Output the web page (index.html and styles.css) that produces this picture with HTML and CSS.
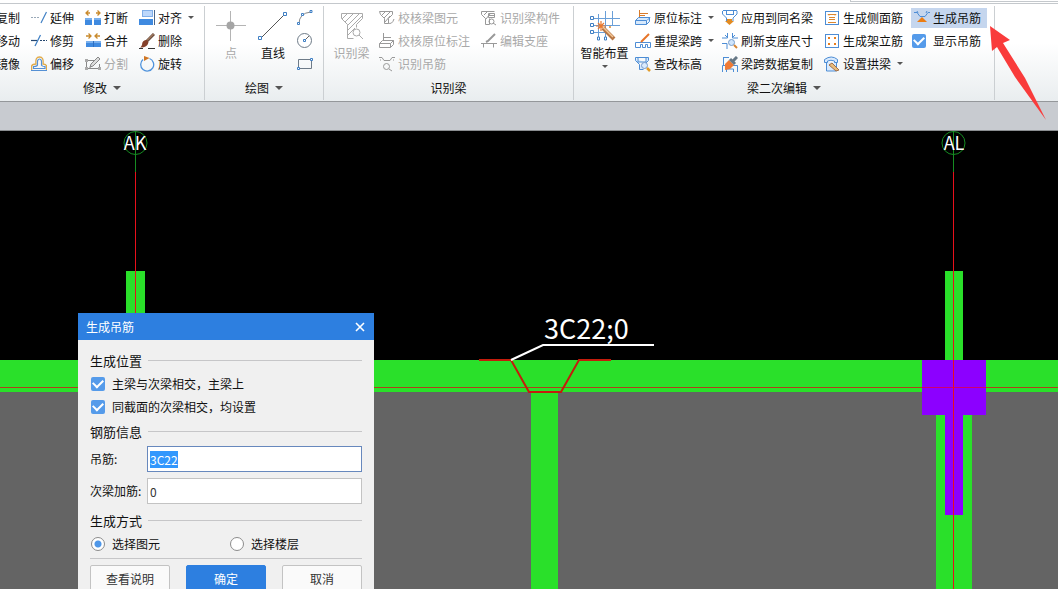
FILE: index.html
```html
<!DOCTYPE html>
<html lang="zh-CN">
<head>
<meta charset="utf-8">
<title>梁二次编辑</title>
<link rel="stylesheet" href="styles.css">
</head>
<body>
<div class="app">
  <div class="tab-strip"><div class="tab-edge"></div></div>
  <header class="ribbon">
    <section class="group group-modify">
      <div class="tools cols-modify">
        <button class="tool tool-cut">复制</button>
        <button class="tool"><svg class="icon" viewBox="0 0 16 16"><path d="M0 7.500H9" stroke="#9aa9b8" stroke-dasharray="2 1"/><path d="M10 13L15.500 2" stroke="#3f7fc4" stroke-width="1.200"/></svg>延伸</button>
        <button class="tool"><svg class="icon" viewBox="0 0 16 16"><path d="M0 8h7v7H0zM9 8h7v7H9z" fill="#3f8ae0"/><path d="M0 8h7v2H0zM9 8h7v2H9z" fill="#79b0ee"/><path d="M3.500 0.500L1 3l2.500 2.500M1 3h4M12.500 0.500L15 3l-2.500 2.500M15 3h-4" stroke="#c98a2c" stroke-width="1.300" fill="none"/></svg>打断</button>
        <button class="tool"><svg class="icon" viewBox="0 0 16 16"><rect x="3.500" y="0.500" width="10" height="6" fill="#bcd7fb" stroke="#80aee8"/><path d="M0 9h14v6H0z" fill="#3f8ae0"/><path d="M15.500 0v15" stroke="#4a6587"/></svg>对齐<i class="caret"></i></button>
        <button class="tool tool-cut">移动</button>
        <button class="tool"><svg class="icon" viewBox="0 0 16 16"><path d="M0 7.500H6" stroke="#24466f" stroke-width="1.200"/><path d="M4 13L9.500 2" stroke="#3f7fc4" stroke-width="1.200"/><path d="M9 7.500h7" stroke="#24466f" stroke-dasharray="2 1"/></svg>修剪</button>
        <button class="tool"><svg class="icon" viewBox="0 0 16 16"><path d="M1 8h15v6H1z" fill="#3f8ae0"/><path d="M1 8h15v2H1z" fill="#79b0ee"/><path d="M8.500 8v6" stroke="#2f6fc0"/><path d="M3.500 0.500L6 3 3.500 5.500M6 3H1M12.500 0.500L10 3l2.500 2.500M10 3h5" stroke="#c98a2c" stroke-width="1.300" fill="none"/></svg>合并</button>
        <button class="tool"><svg class="icon" viewBox="0 0 16 16"><path d="M15 1L7 9" stroke="#6a4f40" stroke-width="3"/><path d="M14.500 1L8 7.500" stroke="#c79472"/><path d="M8 7Q3 7 3 12Q2 14 1 14.500Q8 15 9.500 9.500Z" fill="#84402a"/><path d="M0 15.500h4M9 15.500h7" stroke="#333"/></svg>删除</button>
        <button class="tool tool-cut">镜像</button>
        <button class="tool"><svg class="icon" viewBox="0 0 16 16" fill="none"><path d="M0.600 14.500V10Q1 8.500 5 8Q4 1 8.500 1Q13 1 12 8Q15.500 8.500 15.500 10V14.500" stroke="#e1aa48" stroke-width="1.300"/><path d="M0 14.500h16M2.500 12.500V10.500Q7 10.500 6.500 8Q6 3 8.500 3Q11 3 10.500 8Q10 10.500 14 10.500V12.500Z" stroke="#5590d4" stroke-width="1.200"/></svg>偏移</button>
        <button class="tool" disabled><svg class="icon" viewBox="0 0 16 16" fill="none" stroke="#888"><path d="M9 4.500H1.500v8h13V8M4 12.500L14.500 2"/><path d="M13 1l2 2-7 7-3 1 1-3z" fill="#ddd"/><path d="M0 3h3v3H0zM0 11h3v3H0zM13 11h3v3h-3z" fill="#aaa" stroke="none"/></svg>分割</button>
        <button class="tool"><svg class="icon" viewBox="0 0 16 16"><path d="M10.500 2.500A6.500 6.500 0 1 1 4 3.600" fill="none" stroke="#4f93dc" stroke-width="1.300"/><path d="M5 0l5.500 2L5 5z" fill="#cf7625"/></svg>旋转</button>
      </div>
      <button class="caption">修改<i class="caret caret-big"></i></button>
    </section>

    <section class="group group-draw">
      <div class="tools draw-tools">
        <button class="big" disabled><svg class="icon-big" viewBox="0 0 30 30"><path d="M14.500 0v30M0 14.500h30" stroke="#b4b4b4"/><circle cx="14.500" cy="14.500" r="4" fill="#a5a5a5"/></svg>点</button>
        <button class="big"><svg class="icon-big" viewBox="0 0 30 30"><path d="M3 27L27 3" stroke="#555"/><path d="M0.500 25.500h3v3h-3zM25.500 1.500h3v3h-3z" fill="#fff" stroke="#3f7fc4"/></svg>直线</button>
        <div class="icon-stack">
          <button class="tool" aria-label="弧"><svg class="icon" viewBox="0 0 16 16"><path d="M2 14Q2 3 14 2" stroke="#888" fill="none"/><path d="M.5 12.500h2v2h-2zM4.500 3.500h2v2h-2zM13 .5h2v2h-2z" fill="#fff" stroke="#3f7fc4"/></svg></button>
          <button class="tool" aria-label="圆"><svg class="icon" viewBox="0 0 16 16"><circle cx="7.500" cy="7.500" r="7" fill="none" stroke="#6e7b88"/><path d="M8 7l4-4" stroke="#666"/><path d="M6.500 6.500h2v2h-2z" fill="#fff" stroke="#3f7fc4"/></svg></button>
          <button class="tool" aria-label="矩形"><svg class="icon" viewBox="0 0 16 16"><path d="M1.500 3.500h13v9h-13z" fill="none" stroke="#6e7b88"/><path d="M.5 11.500h2v2h-2zM13.500 2.500h2v2h-2z" fill="#fff" stroke="#3f7fc4"/></svg></button>
        </div>
      </div>
      <button class="caption">绘图<i class="caret caret-big"></i></button>
    </section>

    <section class="group group-identify">
      <div class="tools">
        <button class="big" disabled><svg class="icon-big" viewBox="0 0 30 30" fill="none" stroke="#aaa"><path d="M4.500 2.500h21v5l-6 6v3M10.500 27.500v-14l-6-6v-5M10.500 27.500h6"/><path d="M5 8l5-5M8 11l8-8M11 14L22 3M11 19L25 5M11 24l7-7"/><circle cx="19.500" cy="21.500" r="3.500"/><path d="M22 24l4 4"/></svg>识别梁</button>
        <div class="cols-identify">
          <button class="tool" disabled><svg class="icon" viewBox="0 0 16 16" fill="none" stroke="#999"><path d="M.5 1.500h13v3l-4 4v5h-4v-5l-4-4zM3 5l3-3M5 8l6-6M6 12l5-6M9 13q4 2 6-4"/></svg>校核梁图元</button>
          <button class="tool" disabled><svg class="icon" viewBox="0 0 16 16" fill="none" stroke="#999"><path d="M.5 1.500h13M.5 1.500v3l4 4v6h4v-6M3 5l3-3M5 9l4-5"/><path d="M7.500 3.500h6v4h-6zM7.500 5.500h6"/><circle cx="10.500" cy="11.500" r="2.500"/><path d="M12 13l3 2"/></svg>识别梁构件</button>
          <button class="tool" disabled><svg class="icon" viewBox="0 0 16 16" fill="none" stroke="#999"><path d="M4.500 0v8M4 4.500h8M.5 10.500h11v4H.5zM.5 10.500l3-3h11l-3 3M14.500 7.500v4l-3 3"/></svg>校核原位标注</button>
          <button class="tool" disabled><svg class="icon" viewBox="0 0 16 16" fill="none" stroke="#999"><path d="M0 10.500h16M2.500 10.500v4M12.500 10.500v4"/><path d="M14 1L7 8l-2 1" stroke-width="2"/></svg>编辑支座</button>
          <button class="tool" disabled><svg class="icon" viewBox="0 0 16 16" fill="none" stroke="#999"><path d="M0 1.500h3l2 3h6l2-3h3M1 4h1M14 4h1"/><circle cx="7.500" cy="10.500" r="3"/><path d="M10 13l3 2"/></svg>识别吊筋</button>
        </div>
      </div>
      <div class="caption">识别梁</div>
    </section>

    <section class="group group-edit">
      <div class="tools">
        <button class="big big-wide"><svg class="icon-big" viewBox="0 0 30 30"><path d="M3 7.500h27M3 14.500h27M3 21.500h15M8.500 3v24M15.500 0v27M22.500 0v15" stroke="#6a9fd8" fill="none"/><path d="M.5 5.500h3v3h-3zM.5 12.500h3v3h-3zM.5 19.500h3v3h-3zM7.500 26h2v3h-2zM14.500 26h2v3h-2z" fill="#fff" stroke="#3f7fc4"/><path d="M11 10v10M6 15h10M8 12l6 6M14 12l-6 6" stroke="#e9792e" stroke-width="1.200"/><path d="M13 17l11 11" stroke="#b87745" stroke-width="4"/><path d="M13 16l10 10" stroke="#f3c797" stroke-width="1.500"/><path d="M19 16h2M20 15v2" stroke="#df8b30"/></svg>智能布置<i class="caret"></i></button>
        <div class="cols-edit">
          <button class="tool"><svg class="icon" viewBox="0 0 16 16" fill="none"><path d="M4.500 0v9M4 3.500h9M4 5.500h6" stroke="#d87b2b"/><path d="M.5 10.500h11v4H.5zM.5 10.500l3-3h11.500l-3 3M14.500 7.500v4l-3 3" fill="#d7e9fc" stroke="#4d8dd5"/></svg>原位标注<i class="caret"></i></button>
          <button class="tool"><svg class="icon" viewBox="0 0 16 16" fill="none"><path d="M1 .5h14M.5 1v3l4 4v3M15 1v3l-4 4v3M4 4.500h8M4.500 1v3M11.500 1v3" stroke="#4d8dd5"/><path d="M5 9h5v2h2l-4.500 4L3 11h2z" fill="#e28b22"/></svg>应用到同名梁</button>
          <button class="tool"><svg class="icon" viewBox="0 0 16 16" fill="none"><rect x="1.500" y="1.500" width="13" height="13" stroke="#4d8dd5"/><path d="M4 4.500h8M5 7.500h6M5 9.500h6M4 12.500h8M4 4.500l1 1M12 4.500l-1 1" stroke="#dc8730"/></svg>生成侧面筋</button>
          <button class="tool selected"><svg class="icon" viewBox="0 0 16 16" fill="none"><path d="M0 2.500h3l3 4h5l3-4h2M3 1l1 2M13 1l-1 2" stroke="#4d8dd5"/><path d="M8 7l5 5H3z" fill="#ec7d13"/></svg>生成吊筋</button>
          <button class="tool"><svg class="icon" viewBox="0 0 16 16" fill="none"><path d="M.5 14.500v-5h15v5h-3v-3h-2v3h-3v-3h-2v3z" stroke="#4d8dd5"/><path d="M14 1L6 9" stroke="#e77428" stroke-width="2"/></svg>重提梁跨<i class="caret"></i></button>
          <button class="tool"><svg class="icon" viewBox="0 0 16 16" fill="none"><path d="M5.500 0v5H0M10.500 0v5H16M0 10.500h5V16M3 2l2 2M13 2l-2 2" stroke="#4d8dd5"/><circle cx="9.500" cy="9.500" r="3" fill="#cfe5fc" stroke="#7a9fcb"/><path d="M12 12l3 3" stroke="#d78634" stroke-width="2"/></svg>刷新支座尺寸</button>
          <button class="tool"><svg class="icon" viewBox="0 0 16 16" fill="none"><rect x="1.500" y="1.500" width="13" height="13" stroke="#4d8dd5"/><path d="M4 4h2v2H4zM10 4h2v2h-2zM4 10h2v2H4zM10 10h2v2h-2z" fill="#e87d1b"/></svg>生成架立筋</button>
          <label class="tool check-tool"><input type="checkbox" class="check" checked>显示吊筋</label>
          <button class="tool"><svg class="icon" viewBox="0 0 16 16" fill="none"><path d="M.5 1.500h13v3l-3 3M.5 1.500v3l4 4v5h4M3 1v5h8V1" fill="#d7e9fc" stroke="#4d8dd5"/><circle cx="9.500" cy="9.500" r="3" fill="#d9eafd" stroke="#779acb"/><path d="M12 12l3 3" stroke="#e29b28" stroke-width="2.500"/></svg>查改标高</button>
          <button class="tool"><svg class="icon" viewBox="0 0 16 16" fill="none"><path d="M1 1.500h6M1.500 1v8M.5 16V9.500h15V16M4.500 16v-3h7v3" stroke="#4d8dd5"/><path d="M7 4l5 5-4 4-5 1 0-6z" fill="#ef7a35"/><path d="M8 3l5 5M11 5l4-4" stroke="#667785" stroke-width="3"/></svg>梁跨数据复制</button>
          <button class="tool"><svg class="icon" viewBox="0 0 16 16" fill="none"><path d="M2.500 6v9h10V7M.5 6.500v-3q7-5 13 0v3h-3V5q-3.500-1.500-7 0v1.500z" fill="#d9eafd" stroke="#4d8dd5"/><path d="M5 9l3-2 7 7-3 1z" fill="#e9bd7c" stroke="#a46f45"/></svg>设置拱梁<i class="caret"></i></button>
        </div>
      </div>
      <button class="caption">梁二次编辑<i class="caret caret-big"></i></button>
    </section>
  </header>
  <div class="toolbar-gap"></div>

  <main class="workspace">
    <svg class="drawing">
      <rect y="261" width="100%" height="100%" fill="#646464"/>
      <rect y="229" width="100%" height="32" fill="#2ae02a"/>
      <rect x="126" y="140" width="19" height="90" fill="#2ae02a"/>
      <rect x="531" y="261" width="27" height="100%" fill="#2ae02a"/>
      <rect x="945" y="140" width="18" height="90" fill="#2ae02a"/>
      <rect x="936" y="284" width="36" height="100%" fill="#2ae02a"/>
      <path d="M922 229h64v55h-23v100h-18V284h-23z" fill="#8c00ff"/>
      <rect y="256" width="100%" height="1" fill="#b0401a"/>
      <rect x="922" y="256" width="64" height="1" fill="#d0006c"/>
      <g fill="none" stroke="#168c22">
        <circle cx="135.500" cy="12" r="11.500"/><circle cx="953.500" cy="12" r="11.500"/>
        <path d="M135.500 0v41M953.500 0v41"/>
      </g>
      <rect x="135" y="41" width="1" height="220" fill="#e8101c"/>
      <rect x="953" y="41" width="1" height="100%" fill="#e8101c"/>
      <g class="axis-label"><text x="135" y="19">AK</text><text x="954" y="19">AL</text></g>
      <path d="M479 229h32l18 32h32l18-32h32" fill="none" stroke="#c41c0c" stroke-width="2"/>
      <path d="M511 229l32-15h111" fill="none" stroke="#fff" stroke-width="2"/>
      <text class="rebar-label" x="544" y="208">3C22;0</text>
    </svg>

    <form class="dialog">
      <div class="dialog-title"><span>生成吊筋</span><button type="button" class="close" aria-label="关闭"><svg viewBox="0 0 10 10"><path d="M1 1l8 8M9 1L1 9" stroke="#fff" stroke-width="1.600"/></svg></button></div>
      <div class="dialog-body">
        <h2 class="section">生成位置</h2>
        <label class="option"><input type="checkbox" class="check" checked>主梁与次梁相交，主梁上</label>
        <label class="option"><input type="checkbox" class="check" checked>同截面的次梁相交，均设置</label>
        <h2 class="section">钢筋信息</h2>
        <div class="field"><label for="hanger">吊筋:</label><input id="hanger" type="text" value="3C22" autofocus></div>
        <div class="field"><label for="extra">次梁加筋:</label><input id="extra" type="text" value="0"></div>
        <h2 class="section">生成方式</h2>
        <div class="modes">
          <label class="option"><input type="radio" class="radio" name="mode" checked>选择图元</label>
          <label class="option"><input type="radio" class="radio" name="mode">选择楼层</label>
        </div>
        <div class="actions">
          <button type="button" class="btn">查看说明</button>
          <button type="button" class="btn primary">确定</button>
          <button type="button" class="btn">取消</button>
        </div>
      </div>
    </form>
  </main>
  <svg class="pointer" viewBox="0 0 58 96"><path d="M1 1L21 15L14 18L36 53L57 95L26 52L8 22L3 26Z" fill="#f93b3b"/></svg>
</div>
<script src="script.js"></script>
</body>
</html>
```
FILE: styles.css
```css
* { box-sizing: border-box; }
body {
  margin: 0;
  font: 12px/16px "Noto Sans CJK SC", "Noto Sans", sans-serif;
  color: #111;
}
button {
  font: inherit;
  color: inherit;
  background: none;
  border: 0;
  padding: 0;
  margin: 0;
}
.app {
  position: relative;
  display: flex;
  flex-direction: column;
  height: 100vh;
  overflow: hidden;
}

/* Ribbon */
.tab-strip {
  display: flex;
  justify-content: flex-end;
  height: 4px;
  flex: none;
  background: #fff;
  border-bottom: 1px solid #c4c8cc;
}
.tab-edge {
  width: 208px;
  height: 2px;
  border-left: 1px solid #c4c8cc;
  border-bottom: 1px solid #c4c8cc;
}
.ribbon {
  display: flex;
  flex: none;
  padding: 2px 0 1px;
  background: linear-gradient(#fff 40%, #e9edef);
  border-bottom: 1px solid #94979a;
}
.group {
  display: flex;
  flex-direction: column;
  flex: none;
  border-right: 1px solid #cbcfd2;
}
.group-modify { width: 205px; }
.group-draw { width: 119px; }
.group-identify { width: 250px; }
.group-edit { width: 421px; }
.tools {
  display: flex;
  height: 70px;
}
.cols-modify {
  display: grid;
  grid-template-columns: 20px 43px 43px 55px;
  grid-auto-rows: 23px;
  column-gap: 11px;
}
.cols-identify {
  display: grid;
  grid-template-columns: 91px 80px;
  grid-auto-rows: 23px;
  column-gap: 11px;
}
.cols-edit {
  display: grid;
  grid-template-columns: 87px 102px 87px 79px;
  grid-auto-rows: 23px;
}
.tool {
  display: flex;
  align-items: center;
  gap: 3px;
  white-space: nowrap;
}
.tool-cut { justify-content: flex-end; }
.selected {
  align-self: center;
  height: 20px;
  margin-right: 3px;
  padding-left: 3px;
  background: #c5d6ee;
}
.check-tool {
  gap: 7px;
  padding-left: 1px;
}
.icon {
  width: 16px;
  height: 16px;
  flex: none;
}
.caret {
  border: 3px solid transparent;
  border-top-color: #555;
  border-bottom: 0;
  margin-left: 3px;
}
.caret-big {
  border-width: 4px;
  border-bottom: 0;
  margin-left: 0;
}
.big {
  display: flex;
  flex-direction: column;
  align-items: center;
  width: 42px;
  padding-top: 5px;
  white-space: nowrap;
}
.big .caret { margin: 4px 0 0; }
.group-identify .big { width: 55px; }
.group-draw .tools { padding-left: 5px; }
.big-wide { width: 61px; }
.icon-big {
  width: 30px;
  height: 30px;
  margin-bottom: 4px;
  flex: none;
}
.icon-stack {
  display: grid;
  grid-auto-rows: 23px;
  padding-left: 3px;
}
.caption {
  display: flex;
  justify-content: center;
  align-items: center;
  gap: 6px;
  align-self: center;
  height: 24px;
}
button:disabled { color: #a9a9a9; }
.toolbar-gap {
  flex: none;
  height: 29px;
  background: #c8cbd0;
  border-bottom: 1px solid #8a8d90;
}
.pointer {
  position: absolute;
  left: 989px;
  top: 25px;
  width: 58px;
  height: 96px;
}

/* Drawing area */
.workspace {
  position: relative;
  flex: 1;
  min-height: 0;
  background: #000;
}
.drawing {
  display: block;
  width: 100%;
  height: 100%;
}
.axis-label {
  font-size: 18px;
  fill: #fff;
  text-anchor: middle;
}
.rebar-label {
  font-size: 27px;
  fill: #fff;
}

/* Dialog */
.dialog {
  position: absolute;
  left: 78px;
  top: 182px;
  width: 296px;
  background: #f0f0f0;
}
.dialog-title {
  display: flex;
  justify-content: space-between;
  align-items: center;
  height: 27px;
  padding: 0 8px;
  color: #fff;
  background: #2d7fe0;
}
.close {
  display: flex;
  padding: 1px;
}
.close svg {
  width: 10px;
  height: 10px;
}
.dialog-body { padding: 7px 12px 12px; }
.section {
  display: flex;
  align-items: center;
  gap: 6px;
  height: 23px;
  margin: 2px 0 0;
  font-size: 13px;
  font-weight: 400;
}
.section::after {
  content: "";
  flex: 1;
  border-top: 1px solid #c6c6c8;
}
.option {
  display: flex;
  align-items: center;
  gap: 7px;
  height: 23px;
  padding-left: 1px;
}
.check {
  appearance: none;
  width: 14px;
  height: 14px;
  margin: 0;
  border-radius: 2px;
  background: #559bea;
  display: grid;
  place-items: center;
}
.check:checked::after {
  content: "";
  width: 8px;
  height: 5px;
  margin-bottom: 3px;
  border: solid #fff;
  border-width: 0 0 2px 2px;
  transform: rotate(-45deg);
}
.radio {
  appearance: none;
  width: 14px;
  height: 14px;
  margin: 0;
  border: 1px solid #8c8c8c;
  border-radius: 50%;
  background: #fff;
}
.radio:checked { background: radial-gradient(#4f97e8 3px, #fff 4px); }
.field {
  display: flex;
  align-items: center;
  height: 32px;
}
.field label { width: 57px; white-space: nowrap; }
.field input {
  flex: 1;
  min-width: 0;
  height: 26px;
  padding: 0 2px;
  font: inherit;
  color: #333;
  background: #fff;
  border: 1px solid #c3c3c3;
  outline: 0;
}
.field input:focus { border-color: #6788bd; }
.field input::selection {
  color: #fff;
  background: #3297fd;
}
.modes {
  display: grid;
  grid-template-columns: 139px 1fr;
  padding-bottom: 3px;
  border-bottom: 1px solid #c6c6c8;
}
.actions {
  display: flex;
  justify-content: space-between;
  padding-top: 6px;
}
.btn {
  width: 80px;
  height: 27px;
  color: #333;
  background: #fafafa;
  border: 1px solid #c3c3c3;
  border-radius: 2px;
}
.primary {
  color: #fff;
  background: #2d7fe0;
  border-color: #2d7fe0;
}
```
FILE: script.js
```js
const hanger = document.getElementById("hanger");
hanger.focus();
hanger.select();
```
